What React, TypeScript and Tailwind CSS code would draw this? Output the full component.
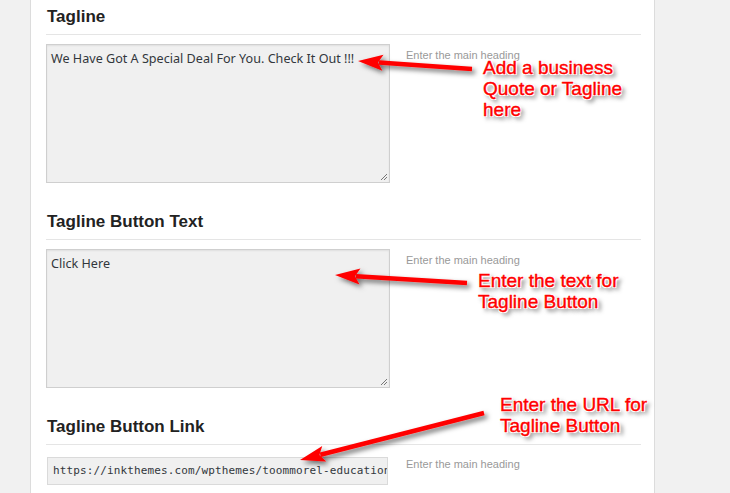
import React from "react";

const sections = [
  { title: "Tagline", value: "We Have Got A Special Deal For You. Check It Out !!!", kind: "area" },
  { title: "Tagline Button Text", value: "Click Here", kind: "area" },
  {
    title: "Tagline Button Link",
    value: "https://inkthemes.com/wpthemes/toommorel-education-wordpress-theme/",
    kind: "input",
  },
];

const outline =
  "[text-shadow:-1px_-1px_0_#fff,1px_-1px_0_#fff,-1px_1px_0_#fff,1px_1px_0_#fff,0_0_2px_#fff,3px_3px_4px_rgba(0,0,0,0.7)] [-webkit-text-stroke:0.4px_#ff0000]";

function Note({ lines, className }: { lines: string[]; className: string }) {
  return (
    <div
      className={`absolute text-[19px] leading-[21px] text-[#ff0000] font-['Liberation_Sans',Arial,sans-serif] whitespace-nowrap ${outline} ${className}`}
    >
      {lines.map((l) => (
        <div key={l}>{l}</div>
      ))}
    </div>
  );
}

function Arrows() {
  // red annotation arrows: [tail, tip]
  const arrows = [
    { x1: 472, y1: 69, x2: 358, y2: 61 },
    { x1: 467, y1: 283, x2: 335, y2: 275 },
    { x1: 484, y1: 413, x2: 300, y2: 460 },
  ];
  return (
    <svg className="absolute inset-0 pointer-events-none" width={730} height={493}>
      <defs>
        <filter id="sh" x="-20%" y="-50%" width="140%" height="200%">
          <feDropShadow dx="3" dy="3" stdDeviation="2.5" floodColor="#000" floodOpacity="0.55" />
        </filter>
      </defs>
      {arrows.map((a, i) => {
        const dx = a.x2 - a.x1;
        const dy = a.y2 - a.y1;
        const len = Math.sqrt(dx * dx + dy * dy);
        const ux = dx / len;
        const uy = dy / len;
        const hl = 25;
        const hw = 8;
        const bx = a.x2 - ux * hl;
        const by = a.y2 - uy * hl;
        const p1 = `${bx - uy * hw},${by + ux * hw}`;
        const p2 = `${bx + uy * hw},${by - ux * hw}`;
        return (
          <g key={i} filter="url(#sh)">
            <line x1={a.x1} y1={a.y1} x2={bx + ux * 4} y2={by + uy * 4} stroke="#ff0000" strokeWidth={4.5} />
            <polygon points={`${a.x2},${a.y2} ${p1} ${bx + ux * 5},${by + uy * 5} ${p2}`} fill="#ff0000" />
          </g>
        );
      })}
    </svg>
  );
}

export default function App() {
  return (
    <div className="relative w-[730px] h-[493px] overflow-hidden flex bg-[#f1f1f1] font-['Liberation_Sans',Arial,sans-serif]">
      <div className="w-[31px] shrink-0 border-r border-[#dcdcdc]" />
      <div className="w-[624px] shrink-0 bg-white border-r border-[#dcdcdc] pl-[15px] pr-[13px]">
        {sections.map((s, i) => (
          <div key={s.title} className={i === 0 ? "pt-[7px]" : "pt-[29px]"}>
            <h3 className="text-[17px] leading-[19px] font-bold text-[#222] pl-[1px] pb-[8px] border-b border-[#e5e5e5]">
              {s.title}
            </h3>
            <div className="flex items-start mt-[9px]">
              {s.kind === "area" ? (
                <div className="relative w-[344px] h-[139px] shrink-0 bg-[#f0f0f0] border border-[#cfcfcf] shadow-[inset_0_1px_2px_rgba(0,0,0,0.07)] px-[4px] pt-[6px] text-[12.6px] leading-[16px] text-[#32373c] font-['Noto_Sans',sans-serif]">
                  {s.value}
                  <svg className="absolute right-[1px] bottom-[1px]" width="9" height="9" viewBox="0 0 9 9">
                    <path d="M8 2 L2 8 M8 5 L5 8" stroke="#777" strokeWidth="1" />
                  </svg>
                </div>
              ) : (
                <div className="w-[341px] h-[28px] shrink-0 ml-[1px] mt-[3px] bg-[#f0f0f0] border border-[#dadada] pl-[5px] flex items-center overflow-hidden whitespace-nowrap text-[11px] tracking-[0.13px] text-[#32373c] font-['DejaVu_Sans_Mono',monospace]">
                  {s.value}
                </div>
              )}
              <div
                className={`text-[11px] leading-[13px] text-[#999] ${
                  s.kind === "area" ? "ml-[16px] mt-[5px]" : "ml-[18px] mt-[4px]"
                }`}
              >
                Enter the main heading
              </div>
            </div>
          </div>
        ))}
      </div>
      <Arrows />
      <Note lines={["Add a business", "Quote or Tagline", "here"]} className="left-[483px] top-[57px]" />
      <Note lines={["Enter the text for", "Tagline Button"]} className="left-[478px] top-[270px]" />
      <Note lines={["Enter the URL for", "Tagline Button"]} className="left-[500px] top-[394px]" />
    </div>
  );
}
